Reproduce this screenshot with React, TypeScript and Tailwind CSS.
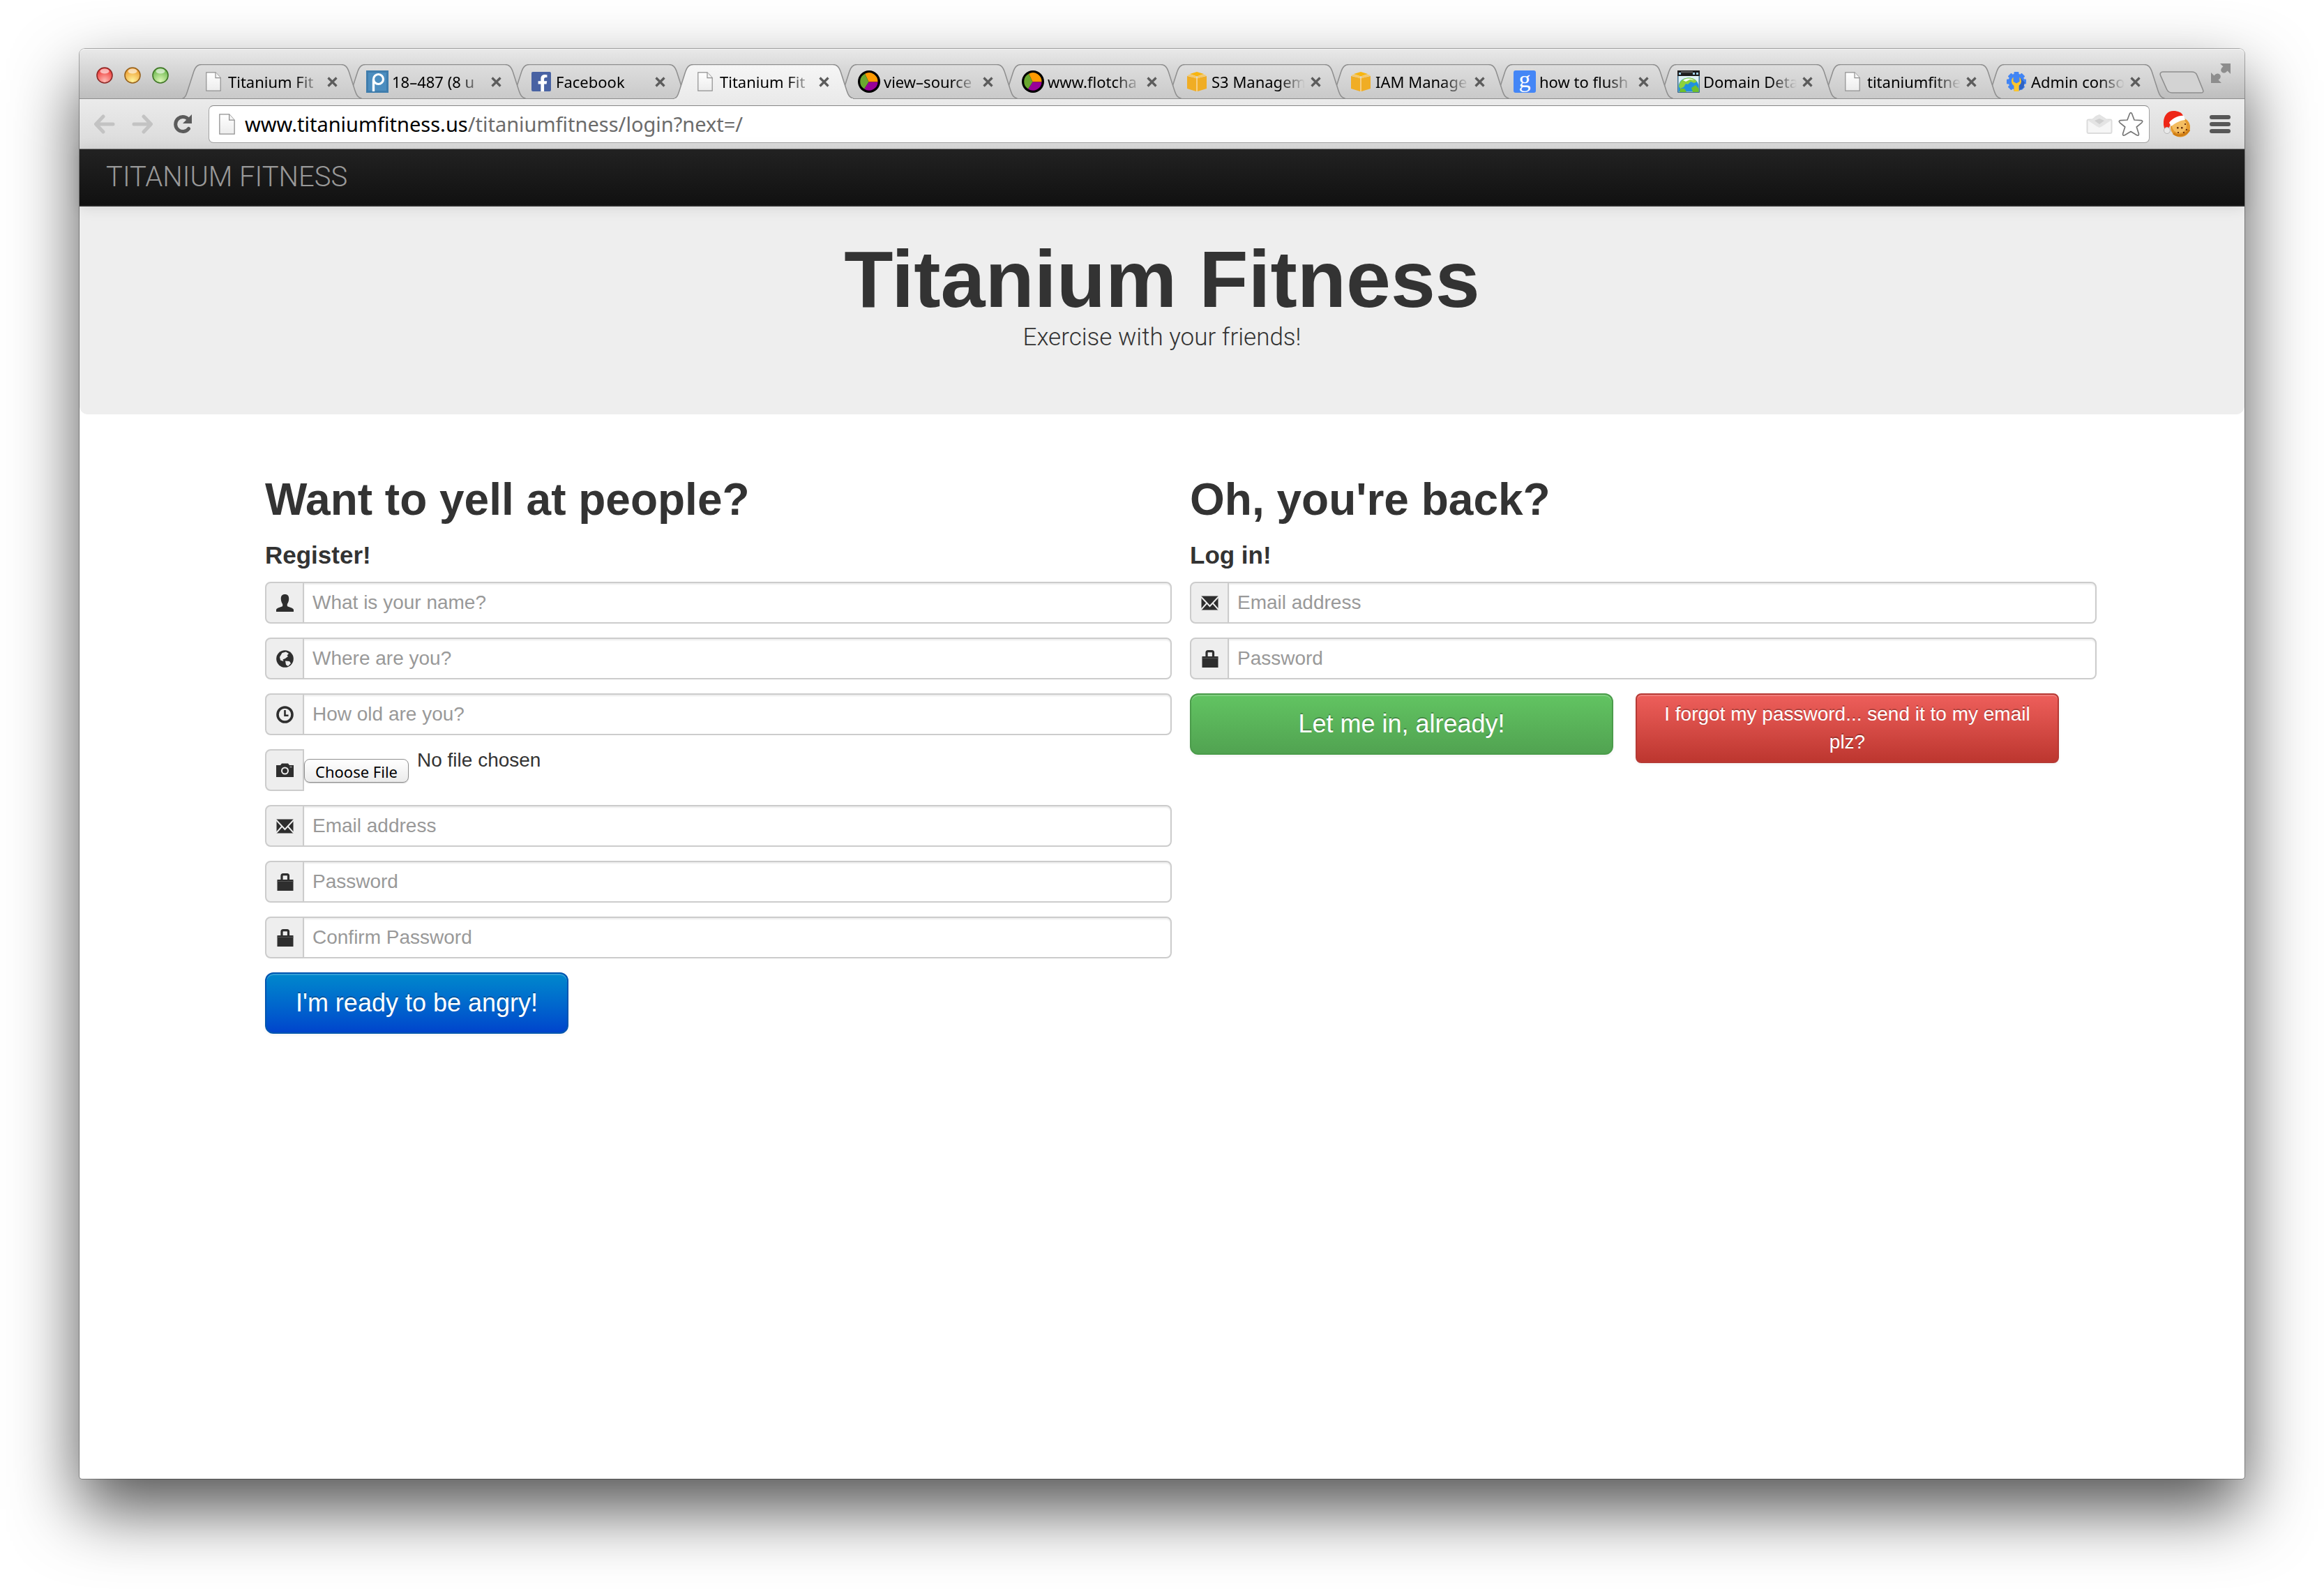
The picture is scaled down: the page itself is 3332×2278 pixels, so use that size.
import React from "react";
import { FaFacebookF } from "react-icons/fa";

/* ---------- favicons ---------- */

function PageIcon({ className = "h-[28px] w-[22px]" }: { className?: string }) {
  return (
    <svg viewBox="0 0 22 28" className={className} preserveAspectRatio="none" aria-hidden="true">
      <defs>
        <linearGradient id="page-fill" x1="0" y1="0" x2="0" y2="1">
          <stop offset="0" stopColor="#ffffff" />
          <stop offset="1" stopColor="#ececec" />
        </linearGradient>
      </defs>
      <path d="M0.8 0.8H14L21.2 8.6V27.2H0.8Z" fill="url(#page-fill)" stroke="#8f8f8f" strokeWidth="1.2" />
      <path d="M14 0.8V8.6H21.2" fill="#f4f4f4" stroke="#8f8f8f" strokeWidth="1.2" />
    </svg>
  );
}

function PiazzaIcon() {
  return (
    <svg viewBox="0 0 32 32" className="size-8" aria-hidden="true">
      <rect width="32" height="32" fill="#3f7dad" />
      <rect x="3" y="3" width="26" height="26" fill="#4c8dbf" />
      <circle cx="17.5" cy="12.5" r="7" fill="none" stroke="#fff" strokeWidth="3.2" />
      <path d="M10.5 13V30" stroke="#fff" strokeWidth="3.4" />
    </svg>
  );
}

function FacebookIcon() {
  return (
    <span className="flex size-7 items-end justify-end overflow-hidden rounded-[2px] bg-[#4862a3] pr-1">
      <FaFacebookF className="h-6 w-4 text-white" aria-hidden="true" />
    </span>
  );
}

function FlotIcon() {
  return (
    <svg viewBox="0 0 32 32" className="size-8" aria-hidden="true">
      <circle cx="16" cy="16" r="16" fill="#000" />
      <path d="M15.500 16.500L10 4.800A12.500 12.500 0 0 1 28.500 16.500Z" fill="#ff9a00" />
      <path d="M15.500 16.500H28.500A12.500 12.500 0 0 1 9 26.500Z" fill="#990099" />
      <path d="M15.500 16.500L9 26.500A12.500 12.500 0 0 1 10 4.800Z" fill="#6aa72f" />
    </svg>
  );
}

function AwsIcon() {
  return (
    <svg viewBox="0 0 28 28" className="size-7" aria-hidden="true">
      <path d="M0 6L13 9V28L0 24Z" fill="#f0ad24" />
      <path d="M28 6L15 9V28L28 24Z" fill="#f0ad24" />
      <path d="M13 9H15V28H13Z" fill="#f6cf86" />
      <path d="M4 3L14 0L24 3L14 6.500Z" fill="#f8b50f" />
      <path d="M0 5L5 3.500L13 6.500V9.500Z" fill="#f6c868" />
      <path d="M28 5L23 3.500L15 6.500V9.500Z" fill="#f6c868" />
    </svg>
  );
}

function GoogleIcon() {
  return (
    <span className="flex size-8 items-center justify-center rounded-[3px] bg-[#4486f6] pb-1.5 font-['Liberation_Serif',serif] text-[34px] leading-none text-white">
      g
    </span>
  );
}

function DomainIcon() {
  return (
    <svg viewBox="0 0 32 32" className="size-8" aria-hidden="true">
      <rect width="32" height="32" rx="1" fill="#3f6f8f" />
      <rect width="32" height="8" fill="#1d1d1d" />
      <rect x="5" y="1" width="17" height="2.500" fill="#555" />
      <path d="M2 3H5V6H2ZM22 3H25V6H22ZM27 3H30V6H27Z" fill="#9fd0ee" />
      <rect x="1.500" y="8" width="29" height="22.500" fill="#dff1f5" />
      <path d="M1.500 30V22C3 14 9 10.500 16 10.500S29 14 30.500 22V30Z" fill="#2191dd" />
      <path d="M2 23C3 14 10 10.500 16 10.500C22 10.500 26 13 28 16L24 18L19 16L15 20L12 19L9 24L4 26Z" fill="#8ed23c" />
      <path d="M4 26L10 26L13 31H3ZM20 25L26 21L30.500 26V31H22Z" fill="#6fc02c" />
      <path d="M8 14C12 10.500 20 10.500 24 14L18 13L12 16Z" fill="#f2fbff" />
    </svg>
  );
}

function AdminIcon() {
  return (
    <svg viewBox="0 0 30 28" className="h-7 w-[30px]" aria-hidden="true">
      <g fill="#4285f4">
        <circle cx="15" cy="14" r="11.500" />
        {[0, 45, 90, 135].map((a) => (
          <rect key={a} x="11.500" y="0" width="7" height="28" rx="1" transform={`rotate(${a} 15 14)`} />
        ))}
      </g>
      <path d="M20 8L27 15L25 23L19 27V18Z" fill="#2f63c4" />
      <path d="M10.500 7.500A8 8 0 0 0 11.500 20V28H18.500V20A8 8 0 0 0 19.500 7.500V14L15 16.500L10.500 14Z" fill="#fbc52d" />
    </svg>
  );
}

/* ---------- browser chrome ---------- */

const TABS: { title: string; icon: React.ReactNode }[] = [
  { title: "Titanium Fit", icon: <PageIcon /> },
  { title: "18–487 (8 u", icon: <PiazzaIcon /> },
  { title: "Facebook", icon: <FacebookIcon /> },
  { title: "Titanium Fit", icon: <PageIcon /> },
  { title: "view–source", icon: <FlotIcon /> },
  { title: "www.flotcha", icon: <FlotIcon /> },
  { title: "S3 Managem", icon: <AwsIcon /> },
  { title: "IAM Manage", icon: <AwsIcon /> },
  { title: "how to flush", icon: <GoogleIcon /> },
  { title: "Domain Deta", icon: <DomainIcon /> },
  { title: "titaniumfitne", icon: <PageIcon /> },
  { title: "Admin conso", icon: <AdminIcon /> },
];
const ACTIVE_TAB = 3;

function Tab({ title, icon, active, order }: { title: string; icon: React.ReactNode; active: boolean; order: number }) {
  return (
    <div className="relative -ml-[23px] flex h-[50px] w-[258px] items-center pl-[29px]" style={{ zIndex: order }}>
      <svg viewBox="0 0 258 50" preserveAspectRatio="none" className="absolute inset-0 size-full" aria-hidden="true">
        <defs>
          <linearGradient id="tab-idle" x1="0" y1="0" x2="0" y2="1">
            <stop offset="0" stopColor="#dedede" />
            <stop offset="1" stopColor="#c9c9c9" />
          </linearGradient>
          <linearGradient id="tab-active" x1="0" y1="0" x2="0" y2="1">
            <stop offset="0" stopColor="#f6f6f6" />
            <stop offset="1" stopColor="#ebebeb" />
          </linearGradient>
        </defs>
        <path
          d="M0 49.500C5 48 6 44 8 38L17 10C19 4 22 0.500 28 0.500H228C234 0.500 237 4 239 10L248 38C250 44 252 48 258 49.500"
          fill={active ? "url(#tab-active)" : "url(#tab-idle)"}
          stroke="#8e8e8e"
          strokeWidth="1.500"
        />
        {active ? <path d="M1 50H257" stroke="#ebebeb" strokeWidth="2" /> : <path d="M0 49.500H258" stroke="#8e8e8e" />}
      </svg>
      <button
        type="button"
        className="relative flex items-center gap-[5px] text-left text-[22px] leading-8 text-black"
      >
        <span className="flex w-8 shrink-0 items-center justify-center">{icon}</span>
        <span className="w-[134px] whitespace-nowrap [mask-image:linear-gradient(to_right,black_72%,transparent)]">
          {title}
        </span>
      </button>
      <button type="button" aria-label="Close tab" className="relative ml-2">
        <svg viewBox="0 0 15 15" className="size-[15px]" aria-hidden="true">
          <path d="M1.500 1.500L13.500 13.500M13.500 1.500L1.500 13.500" stroke="#5c5c5c" strokeWidth="3.200" />
        </svg>
      </button>
    </div>
  );
}

function TrafficLight({ id, edge, dark, light, label }: { id: string; edge: string; dark: string; light: string; label: string }) {
  return (
    <button type="button" aria-label={label} className="size-6">
      <svg viewBox="0 0 24 24" className="size-6" aria-hidden="true">
        <defs>
          <radialGradient id={id} cx="0.5" cy="0.85" r="0.75">
            <stop offset="0" stopColor={light} />
            <stop offset="1" stopColor={dark} />
          </radialGradient>
        </defs>
        <circle cx="12" cy="12" r="11" fill={`url(#${id})`} stroke={edge} strokeWidth="1.600" />
        <ellipse cx="12" cy="6" rx="6.500" ry="3.600" fill="#fff" opacity="0.6" />
      </svg>
    </button>
  );
}

function TabStrip() {
  return (
    <div className="flex h-[72px] items-end rounded-t-[8px] bg-linear-to-b from-[#e9e9e9] to-[#bdbdbd] shadow-[inset_0_-1px_0_#8e8e8e,inset_0_1px_0_#f6f6f6]">
      <div className="mb-[22px] flex w-[170px] shrink-0 gap-4 pl-6">
        <TrafficLight id="tl-close" label="Close" edge="#8e2a28" dark="#ee3b38" light="#ffb9b3" />
        <TrafficLight id="tl-min" label="Minimize" edge="#97621c" dark="#ee9f33" light="#fff29a" />
        <TrafficLight id="tl-zoom" label="Zoom" edge="#3f7526" dark="#6fb951" light="#dcf7b5" />
      </div>
      {TABS.map((t, i) => (
        <Tab key={i} title={t.title} icon={t.icon} active={i === ACTIVE_TAB} order={i === ACTIVE_TAB ? 30 : 20 - i} />
      ))}
      <button type="button" aria-label="New tab" className="mb-2 -ml-2">
        <svg viewBox="0 0 64 32" className="h-8 w-16" aria-hidden="true">
          <path
            d="M5 1H46C50 1 53 3 54 6L62.500 27C63.500 30 62 31 60 31H18C14 31 12 29 10.500 26L1.500 6C0.500 3 2 1 5 1Z"
            fill="#d3d3d3"
            stroke="#8e8e8e"
            strokeWidth="1.600"
          />
        </svg>
      </button>
      <button type="button" aria-label="Full screen" className="mb-[23px] ml-auto mr-5">
        <svg viewBox="0 0 28 28" className="size-7" fill="#8d8d8d" aria-hidden="true">
          <path d="M13 0H28V15L23.500 10.500C21 14 17 15 14.500 11C13.500 8.500 15 6 17.500 4.500Z" />
          <path d="M15 28H0V13L4.500 17.500C7 14 11 13 13.500 17C14.500 19.500 13 22 10.500 23.500Z" />
        </svg>
      </button>
    </div>
  );
}

function CookieIcon() {
  return (
    <svg viewBox="0 0 38 38" className="size-[38px]" aria-hidden="true">
      <circle cx="24" cy="23.500" r="14" fill="#e59a2f" />
      <circle cx="22.500" cy="21" r="10.500" fill="#f3bd62" />
      <path d="M14 32C20 37 32 36 37 27" stroke="#cf7d14" strokeWidth="3" fill="none" />
      <g fill="#6b3510">
        <rect x="19" y="23" width="2.500" height="2.500" />
        <rect x="25" y="23" width="2.500" height="2.500" />
        <rect x="30" y="18" width="2" height="2" />
        <rect x="32" y="26" width="2" height="2" />
        <rect x="20" y="30" width="2" height="2" />
        <rect x="28" y="30" width="2" height="2" />
      </g>
      <path d="M0 20C-1 8 5 0 14 0C21 0 26 2 28 7L11 16L8 24L1 25Z" fill="#ee2617" />
      <path d="M8 17C12 11 22 6 29 7L31 13C25 13 17 17 11 22Z" fill="#fff" />
      <circle cx="5" cy="28" r="4.500" fill="#e9e9e9" stroke="#b5b5b5" />
    </svg>
  );
}

function Toolbar() {
  return (
    <div className="flex h-[72px] items-center bg-linear-to-b from-[#ebebeb] to-[#dadada] pl-5 pr-5 shadow-[inset_0_-1px_0_#8e8e8e]">
      <div className="flex w-[165px] shrink-0 items-center gap-6">
        <button type="button" aria-label="Back">
          <svg viewBox="0 0 31 28" className="h-7 w-[31px]" fill="none" stroke="#c3c3c3" strokeWidth="5" strokeLinecap="round" strokeLinejoin="round" aria-hidden="true">
            <path d="M28 14H5M14 3L3.500 14L14 25" />
          </svg>
        </button>
        <button type="button" aria-label="Forward">
          <svg viewBox="0 0 31 28" className="h-7 w-[31px]" fill="none" stroke="#c3c3c3" strokeWidth="5" strokeLinecap="round" strokeLinejoin="round" aria-hidden="true">
            <path d="M3 14H26M17 3L27.500 14L17 25" />
          </svg>
        </button>
        <button type="button" aria-label="Reload" className="ml-1">
          <svg viewBox="0 0 28 28" className="size-7" fill="none" aria-hidden="true">
            <path d="M21.500 6.500A10.500 10.500 0 1 0 22.500 20.500" stroke="#5b5b5b" strokeWidth="5" strokeLinecap="round" />
            <path d="M27 0V13H14Z" fill="#5b5b5b" />
          </svg>
        </button>
      </div>
      <div className="flex h-[54px] min-w-0 flex-1 items-center rounded-[7px] border border-[#a3a3a3] border-t-[#858585] bg-white pl-[14px] pr-2">
        <PageIcon className="h-[30px] w-[23px] shrink-0" />
        <div className="ml-[14px] min-w-0 flex-1 text-[29px] leading-10">
          <span className="text-black">www.titaniumfitness.us</span>
          <span className="text-[#6b6b6b]">/titaniumfitness/login?next=/</span>
        </div>
        <svg viewBox="0 0 38 30" className="h-[30px] w-[38px]" aria-hidden="true">
          <path d="M7 9L14 3L19 1L27 6L32 10L19 20Z" fill="#e2e2e2" />
          <rect x="1.500" y="8.500" width="35" height="19.500" rx="2" fill="#f6f6f6" stroke="#dcdcdc" strokeWidth="2" />
          <path d="M3 10L15 18L19 20L23 18L35 10L26 7L19 3L12 7Z" fill="#e4e4e4" />
          <path d="M12 10L19 7L26 10L19 15Z" fill="#cfcfcf" />
        </svg>
        <button type="button" aria-label="Bookmark" className="ml-2">
          <svg viewBox="0 0 36 36" className="size-9" aria-hidden="true">
            <path
              d="M16.300 3.200Q18 0 19.700 3.200L23 12L33 12.600Q36 13.400 33.800 15.800L26.300 22L29.500 32Q29.500 35 26.600 33.700L18 28.500L9.400 33.700Q6.500 35 6.500 32L9.700 22L2.200 15.800Q0 13.400 3 12.600L13 12Z"
              fill="#fff"
              stroke="#777"
              strokeWidth="1.700"
              strokeLinejoin="round"
            />
          </svg>
        </button>
      </div>
      <span className="ml-5 mr-7 shrink-0">
        <CookieIcon />
      </span>
      <button type="button" aria-label="Menu" className="flex w-[30px] shrink-0 flex-col gap-1">
        <span className="h-[6px] rounded-full bg-[#575757]" />
        <span className="h-[6px] rounded-full bg-[#575757]" />
        <span className="h-[6px] rounded-full bg-[#575757]" />
      </button>
    </div>
  );
}

/* ---------- form icons ---------- */

const ICONS = {
  user: (
    <path d="M12.500 0C16.500 0 18.500 2.500 18.200 7C18 10 17 12.500 15.800 14V17C18 18.500 24 19 25 22V25H0V22C1 19 7 18.500 9.200 17V14C8 12.500 7 10 6.800 7C6.500 2.500 8.500 0 12.500 0Z" />
  ),
  globe: (
    <>
      <circle cx="12.500" cy="12.500" r="12.300" />
      <path d="M8.500 4L14 2.500L18 5L15.500 7.500L17 9L13 12L9.500 13.500L10.500 16L6 14.500L5 10ZM13 15.500L19 16L21 19L17 23L14 21Z" fill="#eee" />
    </>
  ),
  clock: (
    <>
      <circle cx="12.500" cy="12.500" r="10.500" fill="#eee" stroke="#2e2e2e" strokeWidth="3.600" />
      <path d="M12.500 6V13.800H17.500" fill="none" stroke="#2e2e2e" strokeWidth="2.600" />
    </>
  ),
  camera: (
    <>
      <path d="M0 5H6L8 2.500H17L19 5H25V22H0Z" />
      <circle cx="12.500" cy="13" r="4.500" fill="none" stroke="#eee" strokeWidth="2" />
      <path d="M19.500 7.500H22.500" stroke="#999" strokeWidth="1.600" />
    </>
  ),
  envelope: (
    <>
      <path d="M0.500 2.500H24.500V22.500H0.500Z" />
      <path d="M0 3.500L12.500 17L25 3.500M0 22L8.500 12.500M25 22L16.500 12.500" fill="none" stroke="#eee" strokeWidth="1.900" />
    </>
  ),
  lock: (
    <>
      <path d="M1.500 9H24.500V25H1.500Z" />
      <path d="M8 10V3.500Q8 1.600 10 1.600H15.500Q17.500 1.600 17.500 3.500V10" fill="none" stroke="#2e2e2e" strokeWidth="3.200" />
      <path d="M1.500 11.500H24.500" stroke="#555" />
    </>
  ),
};

function AddOn({ icon, htmlFor, label }: { icon: keyof typeof ICONS; htmlFor: string; label: string }) {
  return (
    <label
      htmlFor={htmlFor}
      className="flex w-14 shrink-0 items-center justify-center rounded-l-[8px] border-2 border-[#ccc] bg-[#eee]"
    >
      <svg viewBox="0 0 25 25" className="size-[25px]" fill="#2e2e2e" role="img" aria-label={label}>
        {ICONS[icon]}
      </svg>
    </label>
  );
}

function Field({ id, icon, label, type = "text" }: { id: string; icon: keyof typeof ICONS; label: string; type?: string }) {
  return (
    <div className="flex h-15">
      <AddOn icon={icon} htmlFor={id} label={label} />
      <input
        id={id}
        type={type}
        placeholder={label}
        className="-ml-[2px] min-w-0 flex-1 rounded-r-[8px] border-2 border-[#ccc] bg-white px-3 text-[28px] leading-10 shadow-[inset_0_2px_2px_rgba(0,0,0,0.075)] placeholder:text-[#999]"
      />
    </div>
  );
}

function FileField() {
  return (
    <div className="flex h-15 items-stretch">
      <AddOn icon="camera" htmlFor="photo" label="Photo" />
      <input id="photo" type="file" className="sr-only" />
      <label
        htmlFor="photo"
        className="mt-[14px] flex h-[34px] w-[150px] items-center justify-center rounded-[8px] border border-[#8f8f8f] bg-linear-to-b from-white to-[#ebebeb] pt-[2px] font-['Noto_Sans','Open_Sans',sans-serif] text-[22px] leading-8 text-black shadow-[0_1px_1px_rgba(0,0,0,0.2)]"
      >
        Choose File
      </label>
      <span className="ml-3 leading-8">No file chosen</span>
    </div>
  );
}

const BTN =
  "border-2 text-white shadow-[inset_0_2px_0_rgba(255,255,255,0.2),0_2px_4px_rgba(0,0,0,0.05)] [text-shadow:0_-2px_0_rgba(0,0,0,0.25)]";

export default function App() {
  return (
    <div className="flex min-h-screen flex-col bg-white px-[114px] pb-[158px] pt-[70px] font-['Liberation_Sans',Arial,sans-serif] text-[28px] leading-10 text-[#333]">
      <div className="flex flex-1 flex-col rounded-b-[4px] rounded-t-[8px] bg-white shadow-[0_0_0_1px_rgba(0,0,0,0.3),0_44px_96px_rgba(0,0,0,0.68)]">
        <header className="font-['Noto_Sans','Open_Sans',sans-serif]">
          <TabStrip />
          <Toolbar />
        </header>

        <nav className="relative flex h-[82px] items-center border-b-2 border-[#252525] bg-linear-to-b from-[#222] to-[#111] px-[38px] shadow-[0_2px_20px_rgba(0,0,0,0.1)]">
          <a href="#" className="font-['Roboto',sans-serif] text-[40px] font-light leading-10 text-[#999]">
            TITANIUM FITNESS
          </a>
        </nav>

        <section className="rounded-b-[12px] bg-[#eee] pb-[86px] pt-11 text-center">
          <h1 className="text-[115px] font-bold leading-[120px]">Titanium Fitness</h1>
          <p className="font-['Roboto',sans-serif] text-[35px] font-light leading-[48px]">Exercise with your friends!</p>
        </section>

        <main className="flex gap-[26px] pl-[266px] pr-[212px] pt-[82px]">
          <section className="min-w-0 flex-1">
            <h2 className="text-[64px] font-bold leading-[80px]">Want to yell at people?</h2>
            <h3 className="mt-5 text-[35px] font-bold leading-10">Register!</h3>
            <form className="mt-[18px] flex flex-col gap-5">
              <Field id="name" icon="user" label="What is your name?" />
              <Field id="place" icon="globe" label="Where are you?" />
              <Field id="age" icon="clock" label="How old are you?" />
              <FileField />
              <Field id="email" icon="envelope" label="Email address" type="email" />
              <Field id="password" icon="lock" label="Password" type="password" />
              <Field id="confirm" icon="lock" label="Confirm Password" type="password" />
              <button
                type="button"
                className={`${BTN} h-[88px] self-start rounded-[12px] border-[#0055b0] bg-linear-to-b from-[#0088cc] to-[#0044cc] px-[42px] text-[36px] leading-10`}
              >
                I'm ready to be angry!
              </button>
            </form>
          </section>

          <section className="min-w-0 flex-1">
            <h2 className="text-[64px] font-bold leading-[80px]">Oh, you're back?</h2>
            <h3 className="mt-5 text-[35px] font-bold leading-10">Log in!</h3>
            <form className="mt-[18px] flex flex-col gap-5">
              <Field id="login-email" icon="envelope" label="Email address" type="email" />
              <Field id="login-password" icon="lock" label="Password" type="password" />
              <div className="grid grid-cols-2 items-start gap-8 pr-[54px]">
                <button
                  type="button"
                  className={`${BTN} h-[88px] rounded-[12px] border-[#4b9c4b] bg-linear-to-b from-[#62c462] to-[#51a351] text-[36px] leading-10`}
                >
                  Let me in, already!
                </button>
                <button
                  type="button"
                  className={`${BTN} h-[100px] rounded-[8px] border-[#b63a35] bg-linear-to-b from-[#ee5f5b] to-[#bd362f] px-6 text-[28px] leading-10`}
                >
                  I forgot my password... send it to my email plz?
                </button>
              </div>
            </form>
          </section>
        </main>
      </div>
    </div>
  );
}
